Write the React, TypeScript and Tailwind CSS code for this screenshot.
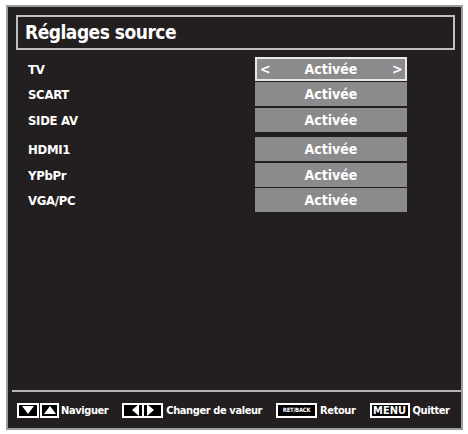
import React from 'react';

const font = { fontFamily: '"Liberation Sans Narrow", "DejaVu Sans Condensed", "Liberation Sans", sans-serif' };

const rows = [
  { label: 'TV', selected: true, mt: 'mt-0' },
  { label: 'SCART', selected: false, mt: 'mt-[1px]' },
  { label: 'SIDE AV', selected: false, mt: 'mt-[2px]' },
  { label: 'HDMI1', selected: false, mt: 'mt-[5px]' },
  { label: 'YPbPr', selected: false, mt: 'mt-[2px]' },
  { label: 'VGA/PC', selected: false, mt: 'mt-[1px]' },
];

const Tri: React.FC<{ dir: 'up' | 'down' | 'left' | 'right' }> = ({ dir }) => {
  const pts = {
    up: '0,10 6,2 12,10',
    down: '0,2 12,2 6,10',
    left: '10,0 10,12 3,6',
    right: '2,0 2,12 9,6',
  }[dir];
  return (
    <svg width="12" height="12" viewBox="0 0 12 12">
      <polygon points={pts} fill="white" />
    </svg>
  );
};

export default function App() {
  return (
    <div className="w-[468px] h-[434px] bg-white pl-[6px] pt-[5px]" style={font}>
      <div className="w-[457px] h-[425px] border-2 border-[#9c9c9c] bg-[#231f20] flex flex-col">
        {/* Title */}
        <div className="mt-[8px] ml-[8px] mr-[6px] h-[35px] border-2 border-[#bdbdbd] flex items-center px-[7px]">
          <span className="text-white font-bold text-[19px] leading-none tracking-[-0.5px]">Réglages source</span>
        </div>

        {/* Rows */}
        <div className="mt-[7px] flex flex-col">
          {rows.map((r) => (
            <div key={r.label} className={`flex items-center h-[24px] ${r.mt}`}>
              <span className="w-[247px] pl-[20px] text-white font-bold text-[13px] leading-none tracking-[-0.3px]">{r.label}</span>
              <div
                className={`w-[152px] h-[24px] bg-[#8b8b8d] flex items-center justify-between px-[3px] text-white font-bold text-[14px] leading-none ${
                  r.selected ? 'border-2 border-[#e8e8e8]' : ''
                }`}
              >
                <span className="w-[10px]">{r.selected ? '<' : ''}</span>
                <span>Activée</span>
                <span className="w-[10px] text-right">{r.selected ? '>' : ''}</span>
              </div>
            </div>
          ))}
        </div>

        <div className="flex-1" />

        {/* Footer */}
        <div className="ml-[4px] h-[2px] bg-[#b5b5b5]" />
        <div className="h-[36px] flex items-center pl-[9px] text-white font-bold text-[11px] leading-none tracking-[-0.4px] whitespace-nowrap">
          <div className="flex items-center">
            <span className="w-[22px] h-[15px] border-2 border-white bg-black flex items-center justify-center">
              <Tri dir="down" />
            </span>
            <span className="w-[19px] h-[15px] border-2 border-white bg-black flex items-center justify-center ml-[1px]">
              <Tri dir="up" />
            </span>
            <span className="ml-[2px]">Naviguer</span>
          </div>
          <div className="flex items-center ml-[14px]">
            <span className="w-[41px] h-[15px] border-2 border-white bg-black flex items-center justify-center gap-[1px]">
              <Tri dir="left" />
              <span className="w-[2px] h-[11px] bg-white" />
              <Tri dir="right" />
            </span>
            <span className="ml-[3px]">Changer de valeur</span>
          </div>
          <div className="flex items-center ml-[14px]">
            <span className="w-[41px] h-[15px] border-2 border-white bg-black flex items-center justify-center text-[6px] tracking-tighter">
              RET/BACK
            </span>
            <span className="ml-[3px]">Retour</span>
          </div>
          <div className="flex items-center ml-[14px]">
            <span className="w-[40px] h-[15px] border-2 border-white bg-black flex items-center justify-center text-[11px] tracking-normal">
              MENU
            </span>
            <span className="ml-[3px]">Quitter</span>
          </div>
        </div>
      </div>
    </div>
  );
}
